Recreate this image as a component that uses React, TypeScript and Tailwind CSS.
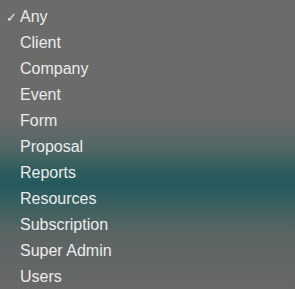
export default function App() {
  const items = [
    "Any",
    "Client",
    "Company",
    "Event",
    "Form",
    "Proposal",
    "Reports",
    "Resources",
    "Subscription",
    "Super Admin",
    "Users",
  ];
  return (
    <div
      className="h-[289px] w-[295px] overflow-hidden pt-[4px] text-[16px] text-[#ececec]"
      style={{
        fontFamily: '"Liberation Sans", Arial, sans-serif',
        background:
          "linear-gradient(to bottom, #6b6b6a 0px, #6a6b6a 120px, #4f6665 150px, #2c5c5e 172px, #245a5c 184px, #3b5f60 205px, #5c6564 235px, #686868 289px)",
      }}
    >
      {items.map((label) => (
        <div key={label} className="flex h-[26px] items-center">
          <span className="w-[20px] pl-[6px] text-[13px] leading-none">
            {label === "Any" ? "✓" : ""}
          </span>
          <span className="leading-none">{label}</span>
        </div>
      ))}
    </div>
  );
}
